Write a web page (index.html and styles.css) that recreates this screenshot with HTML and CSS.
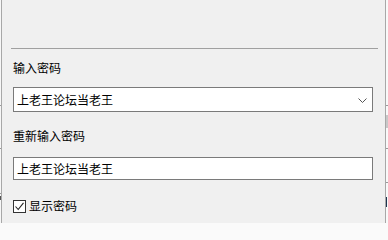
FILE: index.html
```html
<!DOCTYPE html>
<html lang="zh-CN">
<head>
<meta charset="utf-8">
<link rel="stylesheet" href="styles.css">
</head>
<body>
<div class="desk">
  <div class="strip strip-left"></div>
  <div class="dialog">
    <div class="sep"></div>
    <div class="form">
      <div class="label first">输入密码</div>
      <div class="combo">
        <span class="value">上老王论坛当老王</span>
        <svg class="chev" width="9" height="5" viewBox="0 0 9 5"><path d="M0.5 0.5 L4.5 4.5 L8.5 0.5" fill="none" stroke="#555" stroke-width="1"/></svg>
      </div>
      <div class="label second">重新输入密码</div>
      <div class="field"><span class="value">上老王论坛当老王</span></div>
      <label class="check">
        <span class="box"><svg width="11" height="11" viewBox="0 0 11 11"><path d="M1.5 5.5 L4.2 8.5 L9.5 1.8" fill="none" stroke="#222" stroke-width="1.1"/></svg></span>
        <span>显示密码</span>
      </label>
    </div>
  </div>
  <div class="strip strip-right"></div>
</div>
</body>
</html>
```

FILE: styles.css
```css
html, body {
  margin: 0;
  padding: 0;
  width: 388px;
  height: 223px;
  overflow: hidden;
  background: #fafafa;
}
body {
  font-family: "Noto Sans CJK SC", "Noto Sans", sans-serif;
  font-size: 12px;
  color: #000;
}
.desk {
  display: flex;
  height: 223px;
}
.strip {
  flex: none;
  height: 223px;
}
.strip-left {
  width: 1px;
  background:
    linear-gradient(#9a9a9a, #9a9a9a) 0 105px / 1px 1px no-repeat,
    linear-gradient(#9a9a9a, #9a9a9a) 0 148px / 1px 1px no-repeat,
    linear-gradient(#9a9a9a, #9a9a9a) 0 193px / 1px 1px no-repeat,
    linear-gradient(#555, #555) 0 196px / 1px 4px no-repeat,
    #f7f7f7;
}
.strip-right {
  width: 2px;
  background:
    linear-gradient(#9a9a9a, #9a9a9a) 0 105px / 2px 1px no-repeat,
    linear-gradient(#c8c8c8, #c8c8c8) 0 115px / 2px 13px no-repeat,
    linear-gradient(#9a9a9a, #9a9a9a) 0 148px / 2px 1px no-repeat,
    linear-gradient(#9a9a9a, #9a9a9a) 0 182px / 2px 1px no-repeat,
    linear-gradient(#1f3550, #1f3550) 0 197px / 1px 10px no-repeat,
    #f9f9f9;
}
.dialog {
  flex: none;
  width: 385px;
  height: 223px;
  box-sizing: border-box;
  background: #f0f0f0;
  border-left: 1px solid #a8a8a8;
  border-right: 1px solid #a8a8a8;
  padding-top: 48px;
}
.sep {
  margin-left: 9px;
  width: 367px;
  height: 1px;
  background: #a0a0a0;
}
.form {
  padding-left: 11px;
  display: flex;
  flex-direction: column;
  align-items: flex-start;
}
.label {
  line-height: 16px;
  height: 16px;
}
.label.first { margin-top: 11px; }
.label.second { margin-top: 16px; }
.combo {
  margin-top: 11px;
  width: 360px;
  height: 25px;
  box-sizing: border-box;
  border: 1px solid #7a7a7a;
  background: #fff;
  display: flex;
  align-items: center;
  justify-content: space-between;
  padding: 0 5px 0 3px;
}
.field {
  margin-top: 13px;
  width: 360px;
  height: 23px;
  box-sizing: border-box;
  border: 1px solid #7a7a7a;
  background: #fff;
  display: flex;
  align-items: center;
  padding: 0 3px;
}
.value {
  line-height: 16px;
}
.chev {
  display: block;
  margin-top: 2px;
}
.check {
  margin-top: 18px;
  display: flex;
  align-items: center;
  gap: 3px;
  line-height: 16px;
  height: 16px;
}
.box {
  width: 13px;
  height: 13px;
  box-sizing: border-box;
  border: 1px solid #333;
  background: #fff;
  display: flex;
  align-items: center;
  justify-content: center;
}
.box svg { display: block; }
```
